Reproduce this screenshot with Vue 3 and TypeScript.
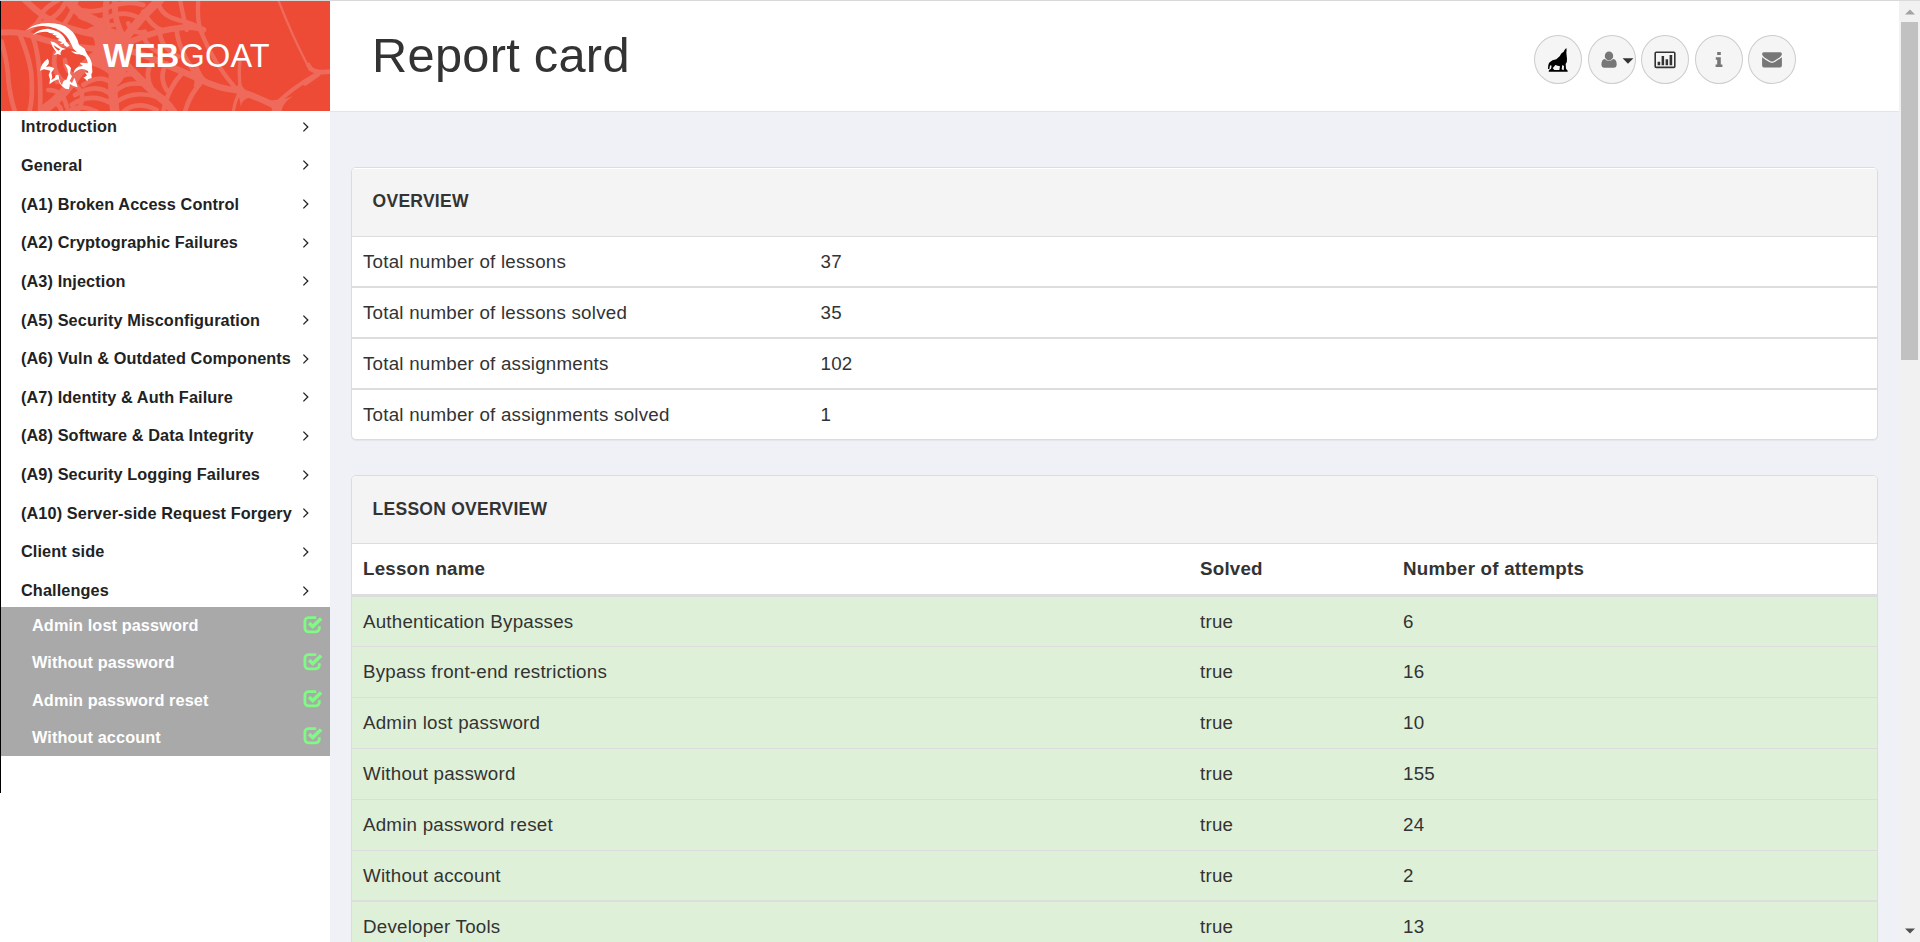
<script setup lang="ts">
interface Stat { label: string; value: number }
interface Lesson { name: string; solved: boolean; attempts: number; strong?: boolean }

const categories: string[] = [
  'Introduction',
  'General',
  '(A1) Broken Access Control',
  '(A2) Cryptographic Failures',
  '(A3) Injection',
  '(A5) Security Misconfiguration',
  '(A6) Vuln & Outdated Components',
  '(A7) Identity & Auth Failure',
  '(A8) Software & Data Integrity',
  '(A9) Security Logging Failures',
  '(A10) Server-side Request Forgery',
  'Client side',
  'Challenges',
]

const challenges: string[] = [
  'Admin lost password',
  'Without password',
  'Admin password reset',
  'Without account',
]

const stats: Stat[] = [
  { label: 'Total number of lessons', value: 37 },
  { label: 'Total number of lessons solved', value: 35 },
  { label: 'Total number of assignments', value: 102 },
  { label: 'Total number of assignments solved', value: 1 },
]

const lessons: Lesson[] = [
  { name: 'Authentication Bypasses', solved: true, attempts: 6 },
  { name: 'Bypass front-end restrictions', solved: true, attempts: 16 },
  { name: 'Admin lost password', solved: true, attempts: 10 },
  { name: 'Without password', solved: true, attempts: 155 },
  { name: 'Admin password reset', solved: true, attempts: 24 },
  { name: 'Without account', solved: true, attempts: 2 },
  { name: 'Developer Tools', solved: true, attempts: 13, strong: true },
]
</script>

<template>
  <div class="page">
    <aside class="sidebar">
      <div class="brand">
        <svg class="web" viewBox="3 3 987 330" preserveAspectRatio="none" aria-hidden="true">
          <g fill="none" stroke="#ef6a5b" stroke-width="14" stroke-linecap="round">
            <path d="M0 98Q60 92 110 112Q190 140 330 150" stroke-width="18" />
            <path d="M5 125Q25 200 25 240Q30 290 45 335" />
            <path d="M60 105Q95 190 95 240Q98 300 88 335" />
            <path d="M100 115Q125 190 120 335" />
            <path d="M130 330Q190 290 235 220Q270 170 330 140" stroke-width="28" />
            <path d="M75 0Q130 55 180 75Q250 100 320 110" stroke-width="19" />
            <path d="M75 100Q120 70 130 35Q140 20 175 0" />
            <path d="M125 70Q180 50 200 0M170 100Q215 50 230 0" />
            <path d="M205 0Q230 40 280 60Q310 75 330 120" stroke-width="28" />
            <path d="M225 25Q280 45 330 20Q385 0 430 15M240 50Q290 75 330 50Q370 30 420 55M260 95Q300 75 340 75" />
            <path d="M320 0Q310 50 330 100M345 0Q340 60 370 110" stroke-width="18" />
            <path d="M480 0Q425 45 365 130" stroke-width="26" />
            <path d="M385 70Q395 105 435 95M430 35Q455 80 485 90M475 5Q480 45 535 60Q580 70 610 90" />
            <path d="M350 145Q450 95 530 85Q580 75 610 90" stroke-width="18" />
            <path d="M540 0Q550 50 560 90M595 0Q590 65 605 100Q640 190 715 275" stroke-width="13" />
            <path d="M430 110Q445 145 480 160M480 95Q480 140 535 170M530 90Q535 150 590 225" />
            <path d="M360 145Q430 160 500 195Q560 220 600 238Q650 265 715 272Q770 290 830 320" stroke-width="19" />
            <path d="M460 180Q430 220 455 265M500 190Q475 230 500 270M550 215Q500 270 490 335M610 240Q570 280 555 335" />
            <path d="M370 185Q410 230 470 285Q500 305 520 335" stroke-width="23" />
            <path d="M350 240Q375 215 410 225M345 275Q380 240 440 255M350 305Q400 270 470 290M370 335Q410 300 470 330" />
            <path d="M340 225Q335 280 345 335" stroke-width="28" />
            <path d="M250 255Q300 220 335 250M225 285Q290 245 335 285M215 315Q270 275 335 310M200 335Q240 310 290 335" />
            <path d="M170 245Q225 235 245 280Q250 310 230 335M145 270Q190 270 200 320M155 305Q180 310 185 335" />
            <path d="M165 160Q155 210 185 240M195 180Q195 215 230 235" />
            <path d="M835 0Q875 105 930 210" stroke-width="7" />
            <path d="M945 225Q875 265 825 315" stroke-width="12" />
            <path d="M925 195Q935 222 990 215M955 222Q930 240 915 250" stroke-width="14" />
            <path d="M720 180Q715 230 722 270Q705 300 700 335" stroke-width="10" />
          </g>
          <g fill="#ef6a5b">
            <path d="M260 90Q320 75 350 90Q405 115 385 180Q380 235 355 255Q335 250 330 225Q300 200 250 190Q285 160 285 135Q285 110 260 90Z" />
            <path d="M570 215Q590 235 580 260L625 245Q600 220 595 195Z" />
            <path d="M685 263Q720 270 722 320Q730 285 775 295Q730 275 720 245Q715 265 685 263Z" />
            <path d="M780 300Q820 310 815 335H845Q845 310 880 288Q840 305 780 300Z" />
          </g>
        </svg>
        <svg class="goat" viewBox="0 0 270 270" aria-hidden="true">
          <g fill="#fff">
            <path d="M34 58Q55 37 100 36Q142 37 162 53Q184 69 192 101L210 114Q210 126 200 132Q185 125 175 113Q168 97 160 83Q145 62 124 53Q100 43 78 45Q55 46 34 58Z" />
            <path d="M53 72Q72 53 99 53Q116 55 131 64Q148 74 153 91L164 104L156 108L147 102L148 97Q141 101 135 98L142 93Q134 92 127 86L134 84L121 77L126 74L112 71L117 67Q103 68 98 63Q79 60 53 72Z" />
            <path d="M106 91L118 94L126 99Q132 106 141 110L153 114L141 117L136 126L138 132L128 129L116 132L124 124Q112 111 106 91ZM115 101Q119 112 130 119L136 115Q124 109 115 101Z" fill-rule="evenodd" />
            <path d="M173 103Q190 103 210 117L218 132Q231 148 231 164L232 184L229 190L230 201L219 205L217 211Q211 204 204 199Q209 201 216 193L209 184L220 186L219 180Q200 169 186 179L176 186Q178 173 190 167L204 165Q195 158 194 155L218 157Q219 151 211 137Q202 131 193 130Q177 130 168 119Q185 126 194 122Q190 113 173 103Z" />
            <path d="M98 143Q104 149 101 158L93 168Q105 163 118 172L109 185Q114 197 109 207L120 200Q121 188 131 192Q132 213 141 222Q145 205 154 207L160 190Q160 174 149 158L159 162Q165 166 168 172L165 187L171 196L164 210L171 216L178 200L183 212L188 229Q173 226 165 219L162 235L151 233Q140 227 134 217L130 205L118 209L103 220L105 205L101 192L106 179L87 175L75 179Q78 157 98 143Z" />
          </g>
        </svg>
        <span class="brand-name"><b>WEB</b>GOAT</span>
      </div>
      <ul class="menu">
        <li v-for="item in categories" :key="item">
          <span>{{ item }}</span>
          <svg class="chevron" viewBox="0 0 8 12" aria-hidden="true"><path d="M1.4 1.6L5.8 6L1.4 10.4" /></svg>
        </li>
      </ul>
      <ul class="submenu">
        <li v-for="item in challenges" :key="item">
          <span>{{ item }}</span>
          <svg class="check" viewBox="0 0 20 18" aria-hidden="true">
            <path d="M13.2 1.7H5.2A3.5 3.5 0 0 0 1.9 5.2V12.3A3.5 3.5 0 0 0 5.2 15.8H12.9A3.5 3.5 0 0 0 16.3 12.3V10.2" stroke-width="2.8" />
            <path d="M6.1 7.1L9.8 10.5L18.1 2.5" stroke-width="3.5" />
          </svg>
        </li>
      </ul>
    </aside>

    <div class="main">
      <header class="topbar">
        <h1>Report card</h1>
        <nav class="tools">
          <button type="button" aria-label="WebWolf">
            <svg width="20" height="24" viewBox="0 0 60 72">
              <path d="M55 0Q57 7 55 14L57 32Q58 42 53 48L54 62L59 68V71H2L3 66L9 62Q12 54 9 50Q4 54 4 63H0Q0 48 5 43Q12 36 25 34L35 25Q39 15 47 11Q49 5 55 0ZM22 51Q18 57 14 60L19 66H34L36 55Q29 54 22 51ZM43 51L41 64L47 67L48 54Z" fill="#000" fill-rule="evenodd" />
            </svg>
          </button>
          <button type="button" class="user" aria-label="User">
            <svg width="33" height="18" viewBox="0 0 33 18">
              <ellipse cx="8" cy="4.9" rx="4.2" ry="4.5" fill="#777" />
              <path d="M3.8 7.9Q8 11.6 12.2 7.9Q15.7 8 15.7 13.5Q15.5 16.7 12.8 16.7H3.4Q.6 16.7.4 13.5Q.5 8 3.8 7.9Z" fill="#777" />
              <path d="M21.6 7.2H32.4L27 12.8Z" fill="#333" />
            </svg>
          </button>
          <button type="button" aria-label="Report card">
            <svg width="22" height="18" viewBox="0 0 22 18">
              <rect x="1.2" y="1.2" width="19.6" height="15.2" rx="1" fill="none" stroke="#333" stroke-width="1.6" />
              <path d="M3.6 10.8H6.2V14.3H3.6ZM7.6 5H10.1V14.3H7.6ZM11.6 8.2H14.1V14.3H11.6ZM15.6 4H18.2V14.3H15.6Z" fill="#333" />
            </svg>
          </button>
          <button type="button" aria-label="About">
            <svg width="8" height="18" viewBox="0 0 8 18">
              <path d="M2.2 1H5.8V4H2.2ZM.8 6.2H5.8V13.4H7.4V15.9H.6V13.4H2.2V8.7H.8Z" fill="#777" />
            </svg>
          </button>
          <button type="button" aria-label="Contact">
            <svg width="20" height="18" viewBox="0 0 20 18">
              <path d="M1.8 1.3H18.2Q19.9 1.3 19.9 2.9Q19.7 4.9 17.8 6.2L12 10Q10 11.2 8 10L2.2 6.2Q.3 4.9.1 2.9Q.1 1.3 1.8 1.3Z" fill="#777" />
              <path d="M.1 6.2Q3.8 9 7.2 11.1Q10 12.7 12.8 11.1Q16.2 9 19.9 6.2V14.6Q19.8 16.6 18 16.6H2Q.2 16.6.1 14.6Z" fill="#777" />
            </svg>
          </button>
        </nav>
      </header>

      <section class="card overview">
        <h2>OVERVIEW</h2>
        <table>
          <colgroup><col class="c-label"><col></colgroup>
          <tbody>
            <tr v-for="s in stats" :key="s.label">
              <td>{{ s.label }}</td>
              <td>{{ s.value }}</td>
            </tr>
          </tbody>
        </table>
      </section>

      <section class="card lessons">
        <h2>LESSON OVERVIEW</h2>
        <table>
          <colgroup><col class="c-name"><col class="c-solved"><col></colgroup>
          <thead>
            <tr><th>Lesson name</th><th>Solved</th><th>Number of attempts</th></tr>
          </thead>
          <tbody>
            <tr v-for="l in lessons" :key="l.name" :class="{ strong: l.strong }">
              <td>{{ l.name }}</td>
              <td>{{ l.solved }}</td>
              <td>{{ l.attempts }}</td>
            </tr>
          </tbody>
        </table>
      </section>
    </div>

    <div class="scrollbar" aria-hidden="true">
      <svg class="arrow" viewBox="0 0 10 6"><path d="M0 5.5L5 .5L10 5.5Z" fill="#a3a3a3" /></svg>
      <div class="thumb"></div>
      <svg class="arrow" viewBox="0 0 10 6"><path d="M0 .5H10L5 5.5Z" fill="#505050" /></svg>
    </div>
  </div>
</template>

<style>
html, body { margin: 0; overflow: hidden; }
</style>

<style scoped>
.page {
  box-sizing: border-box;
  display: flex;
  height: 942px;
  overflow: hidden;
  border-top: 1px solid #d9d9d9;
  background: #f0f1f7;
  color: #333;
  font-family: "Liberation Sans", Arial, sans-serif;
  font-size: 18.75px;
}
ul { margin: 0; padding: 0; list-style: none; }

.sidebar {
  position: relative;
  box-sizing: border-box;
  flex: none;
  width: 330px;
  padding-left: 1px;
  background: #fff;
}
.sidebar::before {
  content: "";
  position: absolute;
  left: 0;
  top: 0;
  width: 1px;
  height: 792px;
  background: #000;
}
.brand {
  position: relative;
  display: flex;
  align-items: center;
  height: 110px;
  overflow: hidden;
  background: #ed4b36;
}
.web { position: absolute; inset: 0; width: 329px; height: 110px; }
.goat { position: relative; flex: none; width: 90px; height: 90px; margin-left: 14px; }
.brand-name {
  position: relative;
  margin-left: -2px;
  color: #fff;
  font-size: 32.5px;
  line-height: 110px;
  letter-spacing: 0.2px;
}

.menu li, .submenu li {
  display: flex;
  align-items: center;
  justify-content: space-between;
  font-size: 16.25px;
  font-weight: bold;
  letter-spacing: 0.11px;
  white-space: nowrap;
}
.menu { box-sizing: border-box; height: 496px; padding-top: 0.4px; }
.menu li {
  height: 30.67px;
  margin-bottom: 8px;
  padding: 0 20.5px 0 20px;
  color: #222;
}
.chevron { width: 8px; height: 12px; fill: none; stroke: #222; stroke-width: 1.3; }
.submenu { background: #a9a9a9; }
.submenu li {
  height: 37.25px;
  padding: 0 7px 0 31px;
  color: #fff;
}
.check { width: 20px; height: 18px; margin-top: -2px; fill: none; stroke: #80fa84; }

.main { flex: none; width: 1569px; }
.topbar {
  box-sizing: border-box;
  display: flex;
  justify-content: space-between;
  height: 111px;
  padding: 0 103px 0 42px;
  border-bottom: 1px solid #e4e4e6;
  background: #fff;
}
h1 { margin: 0; font-size: 48.75px; font-weight: normal; line-height: 109px; letter-spacing: 0.28px; }
.tools { display: flex; gap: 5.5px; padding-top: 34px; }
.tools button {
  box-sizing: border-box;
  display: flex;
  align-items: center;
  justify-content: center;
  width: 48px;
  height: 49px;
  padding: 0;
  border: 1px solid #ccc;
  border-radius: 50%;
  background: #f5f5f5;
}
.tools .user { justify-content: flex-start; padding-left: 12px; }

.card {
  box-sizing: border-box;
  width: 1527px;
  margin-left: 21px;
  border: 1px solid #dcdcde;
  border-radius: 5px;
  background: #fff;
  box-shadow: 0 1px 1px rgba(0, 0, 0, 0.05);
  overflow: hidden;
}
h2 {
  box-sizing: border-box;
  margin: 0;
  padding-left: 20.6px;
  border-bottom: 1px solid #ddd;
  background: #f4f4f4;
  font-size: 17.5px;
  font-weight: bold;
  letter-spacing: 0.26px;
}
table { width: 100%; border-spacing: 0; table-layout: fixed; letter-spacing: 0.22px; }
td, th { padding: 0 0 0 11px; line-height: 49px; text-align: left; }

.overview { height: 273px; margin-top: 55px; }
.overview h2 { height: 69px; border-top: 1px solid #fff; line-height: 65px; }
.overview tr + tr td { border-top: 2px solid #ddd; }
.c-label { width: 457.5px; }

.lessons { height: 560px; margin-top: 35px; }
.lessons h2 { height: 68px; line-height: 67px; }
.c-name { width: 837px; }
.c-solved { width: 203px; }
.lessons th { padding-bottom: 1px; border-bottom: 3px solid #ddd; }
.lessons tbody td { background: #dff0d8; }
.lessons tbody tr + tr td { padding-bottom: 1px; border-top: 1px solid #ddd; }
.lessons tbody tr:nth-last-child(2) td { padding-bottom: 0; }
.lessons tbody tr.strong td { border-top-width: 2px; }

.scrollbar {
  box-sizing: border-box;
  flex: 1;
  display: flex;
  flex-direction: column;
  padding: 8px 2px 8px;
  background: #f1f1f1;
}
.thumb { height: 338px; margin: 7px 0 auto; background: #c1c1c1; }
.arrow { display: block; width: 10px; height: 6px; margin: 0 auto; }
.arrow:last-child { margin-bottom: 0; }
</style>
